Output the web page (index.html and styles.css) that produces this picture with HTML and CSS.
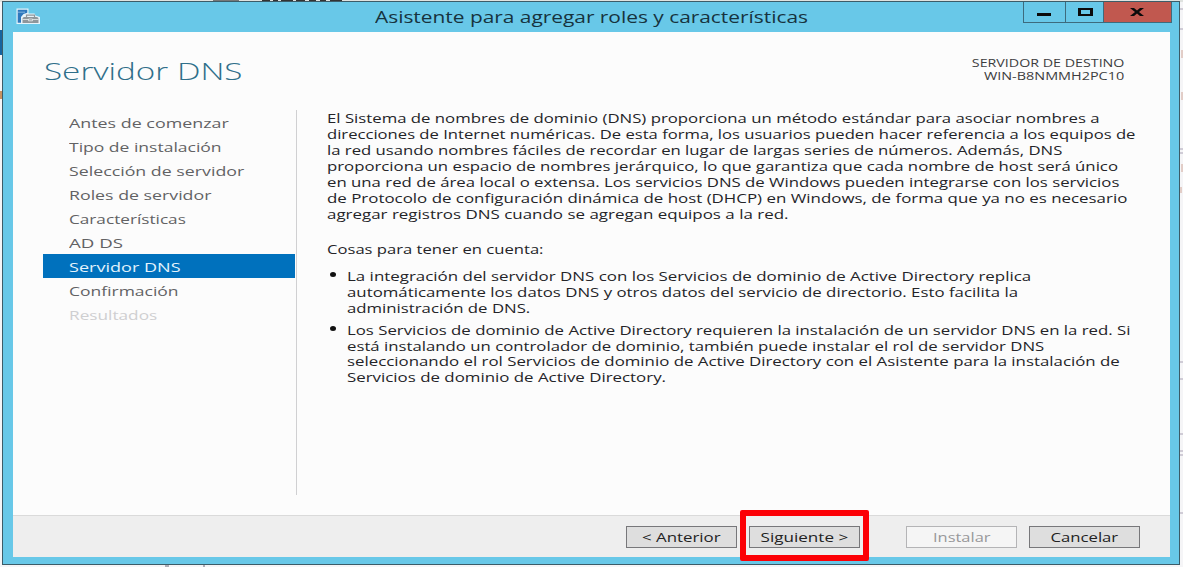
FILE: index.html
```html
<!DOCTYPE html>
<html lang="es">
<head>
<meta charset="utf-8">
<title>Asistente para agregar roles y características</title>
<link rel="stylesheet" href="styles.css">
</head>
<body>
<div class="desktop">
  <div class="backdrop" aria-hidden="true">
    <svg width="1183" height="567" viewBox="0 0 1183 567">
      <rect width="1183" height="567" fill="#f5f5f7"/>
      <rect width="1183" height="2" fill="#dfe2df"/>
      <path d="M213 0h26v1h-26z" fill="#777"/>
      <path d="M262 0h8M273 0h5M281 0h12M296 0h9M309 0h7M320 0h6M330 0h12" stroke="#333" stroke-width="2"/>
      <path d="M0 30h2v25H0z" fill="#1764a0"/>
      <path d="M0 91h2v8H0z" fill="#c79261"/>
      <path d="M1180 9h3M1180 29h3M1180 149h3M1180 153h3M1180 362h3M1180 379h3M1180 434h3M1180 451h3M1180 455h3M1180 513h3" stroke="#aaa3b5"/>
      <path d="M1182 50v8M1182 92v8M1182 164v8M1181 187v6" stroke="#d0a698"/>
      <path d="M204 565v2M165 566h4" stroke="#667"/>
    </svg>
  </div>
  <main class="window">
    <header class="titlebar">
      <svg class="app-icon" width="25" height="18" viewBox="0 0 25 18">
        <path d="M.5.5h12v5h6l1 2 4.500 1.500v7H.5z" fill="#e6f3fa"/>
        <path d="M1.700 1.700h9.600v3L7.500 6 5 9v5.800H1.700z" fill="#2e78bd"/>
        <path d="M2 4.200h7" stroke="#7fb3dc"/>
        <path d="M6.500 11c0-1.400 1-2 2.300-2h11.400c1.400 0 2.300.8 2.300 2v3.900h-16z" fill="#8f969a"/>
        <path d="M10.500 9V7.200h8V9" fill="none" stroke="#8f969a" stroke-width="1.200"/>
        <path d="M6.500 11.500h6m4 0h6M12.500 11h4v1.800h-4z" fill="none" stroke="#e8edef" stroke-width=".8"/>
      </svg>
      <h1 class="window-title"><span class="fit" data-width="433">Asistente para agregar roles y características</span></h1>
      <div class="controls">
        <span class="control minimize"><svg width="41" height="20"><path d="M13 11h14v3H13z"/></svg></span>
        <span class="control maximize"><svg width="37" height="20"><path fill-rule="evenodd" d="M12 6h15v8H12zm3 2v4h9V8z"/></svg></span>
        <span class="control close"><svg width="67" height="20"><path d="M26 6h4l3 2.600L36 6h4l-5 4 5 4h-4l-3-2.600L30 14h-4l5-4z"/></svg></span>
      </div>
    </header>
    <div class="client">
      <div class="heading">
        <h2 class="page-title"><span class="fit" data-width="198">Servidor DNS</span></h2>
        <div class="target">
          <div><span class="fit from-right" data-width="152">SERVIDOR DE DESTINO</span></div>
          <div><span class="fit from-right" data-width="140">WIN-B8NMMH2PC10</span></div>
        </div>
      </div>
      <div class="body">
        <nav class="steps">
          <div class="step"><span class="fit" data-width="160">Antes de comenzar</span></div>
          <div class="step"><span class="fit" data-width="153">Tipo de instalación</span></div>
          <div class="step"><span class="fit" data-width="175">Selección de servidor</span></div>
          <div class="step"><span class="fit" data-width="142">Roles de servidor</span></div>
          <div class="step"><span class="fit" data-width="117">Características</span></div>
          <div class="step"><span class="fit" data-width="54">AD DS</span></div>
          <div class="step selected"><span class="fit" data-width="111">Servidor DNS</span></div>
          <div class="step"><span class="fit" data-width="110">Confirmación</span></div>
          <div class="step disabled"><span class="fit" data-width="88">Resultados</span></div>
        </nav>
        <section class="content">
          <div class="para">
            <div><span class="fit" data-width="773">El Sistema de nombres de dominio (DNS) proporciona un método estándar para asociar nombres a</span></div>
            <div><span class="fit" data-width="808">direcciones de Internet numéricas. De esta forma, los usuarios pueden hacer referencia a los equipos de</span></div>
            <div><span class="fit" data-width="735">la red usando nombres fáciles de recordar en lugar de largas series de números. Además, DNS</span></div>
            <div><span class="fit" data-width="791">proporciona un espacio de nombres jerárquico, lo que garantiza que cada nombre de host será único</span></div>
            <div><span class="fit" data-width="793">en una red de área local o extensa. Los servicios DNS de Windows pueden integrarse con los servicios</span></div>
            <div><span class="fit" data-width="800">de Protocolo de configuración dinámica de host (DHCP) en Windows, de forma que ya no es necesario</span></div>
            <div><span class="fit" data-width="461">agregar registros DNS cuando se agregan equipos a la red.</span></div>
          </div>
          <div class="para intro"><span class="fit" data-width="216">Cosas para tener en cuenta:</span></div>
          <ul class="notes">
            <li>
              <div><span class="fit" data-width="684">La integración del servidor DNS con los Servicios de dominio de Active Directory replica</span></div>
              <div><span class="fit" data-width="671">automáticamente los datos DNS y otros datos del servicio de directorio. Esto facilita la</span></div>
              <div><span class="fit" data-width="183">administración de DNS.</span></div>
            </li>
            <li class="tight">
              <div><span class="fit" data-width="784">Los Servicios de dominio de Active Directory requieren la instalación de un servidor DNS en la red. Si</span></div>
              <div><span class="fit" data-width="697">está instalando un controlador de dominio, también puede instalar el rol de servidor DNS</span></div>
              <div><span class="fit" data-width="773">seleccionando el rol Servicios de dominio de Active Directory con el Asistente para la instalación de</span></div>
              <div><span class="fit" data-width="319">Servicios de dominio de Active Directory.</span></div>
            </li>
          </ul>
        </section>
      </div>
      <footer class="footer">
        <button class="button"><span class="fit centered" data-width="79">&lt; Anterior</span></button>
        <button class="button next"><span class="fit centered" data-width="88">Siguiente &gt;</span></button>
        <button class="button install" disabled><span class="fit centered" data-width="57">Instalar</span></button>
        <button class="button"><span class="fit centered" data-width="68">Cancelar</span></button>
      </footer>
    </div>
  </main>
</div>
<script src="fit.js"></script>
</body>
</html>
```
FILE: styles.css
```css
*, *::before, *::after { box-sizing: border-box; }
body {
  margin: 0;
  overflow: hidden;
  font-family: "Open Sans", "Noto Sans", sans-serif;
  color: #242428;
}
.desktop { position: relative; width: 1183px; height: 567px; padding: 1px 3px 2px 2px; }
.backdrop { position: absolute; inset: 0; z-index: -1; }
.backdrop svg { display: block; }
.window {
  display: flex;
  flex-direction: column;
  height: 564px;
  border: 1px solid #3c5c68;
  background: #68c8e8;
  padding: 0 9px 7px 10px;
}
.fit { display: inline-block; white-space: nowrap; transform-origin: 0 50%; }
.from-right { transform-origin: 100% 50%; }
.centered { transform-origin: 50% 50%; }

.titlebar { display: flex; height: 30px; flex: none; }
.app-icon { margin: 6px 0 0 3px; flex: none; }
.window-title {
  flex: none;
  width: 432px;
  margin: 0 0 0 334px;
  font-size: 16px;
  line-height: 30px;
  font-weight: 400;
  color: #17333e;
}
.controls {
  display: flex;
  height: 21px;
  margin: 0 -2px 0 auto;
  border: 1px solid #3d6b7d;
  border-top: 0;
}
.control { display: block; height: 20px; }
.control + .control { border-left: 1px solid #3d6b7d; }
.control svg { display: block; fill: #0b0b0b; }
.close { background: #c1584f; }

.client { display: flex; flex-direction: column; flex: 1; background: #fcfcfc; }
.heading { display: flex; justify-content: space-between; height: 78px; padding: 22px 46px 0 31px; }
.page-title { margin: 0; font-size: 24px; line-height: 34px; font-weight: 300; color: #2f6f8a; }
.target { text-align: right; font-size: 10.500px; line-height: 13px; padding-top: 3px; color: #3c3c3e; }
.body { display: flex; flex: 1; }
.steps {
  width: 284px;
  height: 385px;
  padding: 0 1px 0 30px;
  border-right: 1px solid #d0d0d2;
  font-size: 13.500px;
  color: #626264;
}
.step { height: 24px; padding: 1px 0 0 26px; line-height: 24px; }
.selected { background: #0071bd; color: #e4f3fc; }
.disabled { color: #cfcfd1; }
.content { padding-left: 30px; font-size: 13px; line-height: 16px; }
.intro { margin-top: 19px; }
.notes { list-style: none; margin: 11px 0 0; padding: 0; }
.notes li { position: relative; padding-left: 20px; margin-bottom: 6px; }
.notes .tight { padding-top: 1px; line-height: 15.700px; }
.notes li::before {
  content: "";
  position: absolute;
  left: 3px;
  top: 4px;
  width: 6px;
  height: 5px;
  border-radius: 50%;
  background: #111;
}
.footer {
  display: flex;
  height: 42px;
  flex: none;
  padding: 10px 30px 0 0;
  justify-content: flex-end;
  gap: 12px;
  border-top: 1px solid #dadada;
  background: #eee;
}
.button {
  position: relative;
  display: flex;
  justify-content: center;
  width: 111px;
  height: 22px;
  padding: 0;
  border: 1px solid #77777a;
  background: #dedede;
  color: #222;
  font: 13px/20px "Open Sans", "Noto Sans", sans-serif;
}
.install { margin-left: 34px; border-color: #b4b4b6; background: #f5f5f5; color: #98989a; }
.next::after {
  content: "";
  position: absolute;
  left: -10px;
  top: -17px;
  width: 129px;
  height: 51px;
  border: 6px solid #fc0005;
  border-radius: 2px;
}
```
FILE: fit.js
```js
// Stretch each label horizontally to its design width.
document.querySelectorAll(".fit").forEach(function (el) {
  el.style.transform = "scaleX(" + Number(el.dataset.width) / el.offsetWidth + ")";
});
```
